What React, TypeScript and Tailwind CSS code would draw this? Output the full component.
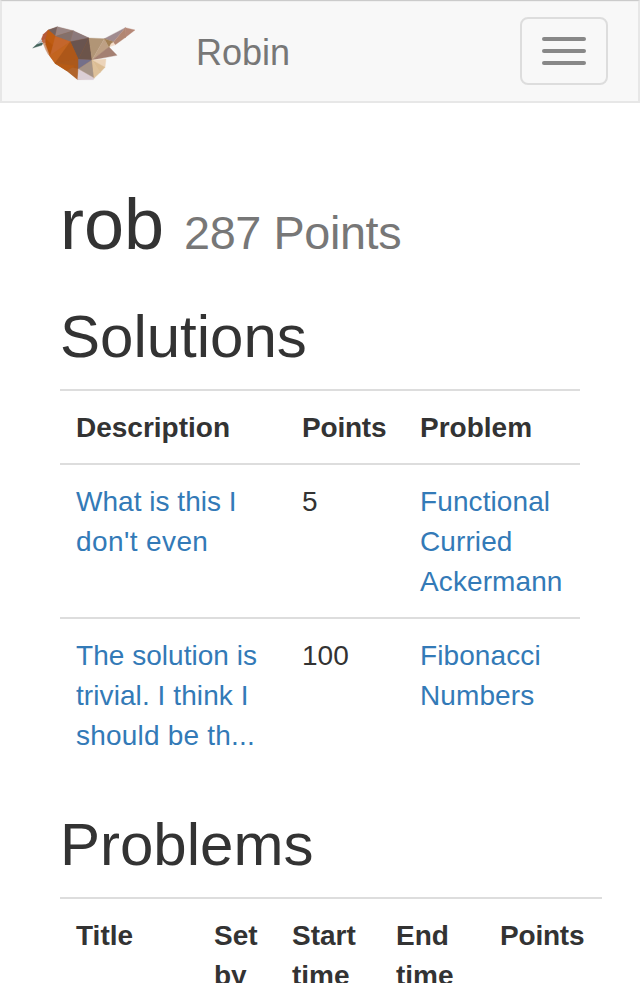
const facets: { points: string; fill: string }[] = [
  { points: '70,45 97,37 145,49 192,70 201,135 207,189 160,193 125,166 90,144 74,122 63,94 52,78 56,60', fill: '#b5602c' },
  { points: '23,99 44,80 54,85 50,91', fill: '#44635b' },
  { points: '36,87 49,73 52,82 40,86', fill: '#c3ccd4' },
  { points: '49,73 55,58 70,45 66,68 58,80', fill: '#b4593a' },
  { points: '50,78 66,68 64,84 57,86', fill: '#bb6a48' },
  { points: '54,84 64,84 75,122 70,119 62,104', fill: '#cf9878' },
  { points: '70,45 97,35 91,64', fill: '#75615e' },
  { points: '97,35 145,47 91,64', fill: '#9a8583' },
  { points: '91,64 145,47 136,80', fill: '#84706b' },
  { points: '145,47 192,69 136,80', fill: '#8c7a7c' },
  { points: '136,80 192,69 160,133', fill: '#69544f' },
  { points: '192,69 201,135 160,133', fill: '#6c544a' },
  { points: '70,45 91,64 64,70', fill: '#c4621b' },
  { points: '70,46 92,65 84,92 62,72', fill: '#bf5c12' },
  { points: '62,71 84,92 75,122 62,88', fill: '#b8550b' },
  { points: '91,64 136,80 76,122', fill: '#c4662c' },
  { points: '74,122 136,80 90,145', fill: '#c2641f' },
  { points: '136,80 160,133 90,145', fill: '#ad5719' },
  { points: '90,145 160,133 160,162', fill: '#ab591c' },
  { points: '90,145 160,162 158,194 125,167', fill: '#b1642c' },
  { points: '90,145 150,152 125,167', fill: '#b65b16' },
  { points: '160,133 201,135 160,162', fill: '#74708a' },
  { points: '160,162 201,135 207,190', fill: '#a59386' },
  { points: '160,162 207,189 205,194 158,194', fill: '#dccfd6' },
  { points: '192,69 238,71 201,135', fill: '#b19576' },
  { points: '238,71 252,98 201,135', fill: '#bea084' },
  { points: '252,96 276,121 201,135', fill: '#a48072' },
  { points: '238,71 301,38 266,80', fill: '#a08b8f' },
  { points: '238,71 266,80 252,97', fill: '#a27f54' },
  { points: '301,38 330,45 300,68', fill: '#b58776' },
  { points: '301,38 302,67 271,89 264,83', fill: '#b28672' },
  { points: '258,86 265,82 270,90 254,95', fill: '#f2dcc8' },
  { points: '201,135 243,132 240,158', fill: '#ecd4ba' },
  { points: '201,135 240,157 224,174', fill: '#dbbc93' },
  { points: '201,135 226,172 207,190', fill: '#dec19a' },
]

function RobinLogo() {
  return (
    <svg viewBox="0 0 360 225" className="h-[75px] w-[120px]" aria-label="Robin logo">
      {facets.map((f, i) => (
        <polygon key={i} points={f.points} fill={f.fill} stroke={f.fill} strokeWidth="1" />
      ))}
    </svg>
  )
}

function Navbar() {
  return (
    <nav className="flex h-[103px] items-start border-2 border-t border-[#e7e7e7] border-t-[#cbcbcb] bg-[#f8f8f8] shadow-[inset_0_1px_0_#f0f0f0]">
      <a href="#" className="ml-[23px] mt-[14px]">
        <RobinLogo />
      </a>
      <a href="#" className="ml-[51px] mt-8 text-[36px] leading-[40px] text-[#777]">
        Robin
      </a>
      <button className="ml-auto mr-[30px] mt-4 flex h-[68px] w-[88px] flex-col items-center justify-center gap-2 rounded-lg border-2 border-[#ddd]">
        <span className="h-1 w-11 rounded-[2px] bg-[#888]" />
        <span className="h-1 w-11 rounded-[2px] bg-[#888]" />
        <span className="h-1 w-11 rounded-[2px] bg-[#888]" />
      </button>
    </nav>
  )
}

const cell = 'border-t-2 border-[#ddd] px-4 pt-[17px] pb-[15px] text-left align-top'

const solutions = [
  {
    lines: [
      { text: 'What is this I', tracking: 'tracking-[0.03px]' },
      { text: "don't even", tracking: 'tracking-[0.4px]' },
    ],
    points: 5,
    problem: 'Functional Curried Ackermann',
  },
  {
    lines: [
      { text: 'The solution is', tracking: 'tracking-[0.03px]' },
      { text: 'trivial. I think I', tracking: 'tracking-[0.08px]' },
      { text: 'should be th...', tracking: 'tracking-[0.2px]' },
    ],
    points: 100,
    problem: 'Fibonacci Numbers',
  },
]

export default function App() {
  return (
    <div className="h-[983px] overflow-hidden bg-white font-['Liberation_Sans',Arial,sans-serif] text-[28px] leading-[40px] text-[#333]">
      <Navbar />
      <main className="px-[60px] pt-[81px]">
        <h1 className="text-[72px] leading-[80px]">
          rob <small className="text-[46.8px] leading-none tracking-[-0.4px] text-[#777]">287 Points</small>
        </h1>

        <h2 className="mb-[19px] mt-10 text-[60px] leading-[66px]">Solutions</h2>
        <table className="mb-[41px] w-[520px] table-fixed border-separate border-spacing-0">
          <colgroup>
            <col className="w-[226px]" />
            <col className="w-[118px]" />
            <col className="w-[176px]" />
          </colgroup>
          <thead>
            <tr>
              <th className={cell}>Description</th>
              <th className={`${cell} tracking-[-0.2px]`}>Points</th>
              <th className={cell}>Problem</th>
            </tr>
          </thead>
          <tbody>
            {solutions.map((s) => (
              <tr key={s.problem}>
                <td className={cell}>
                  <a href="#" className="text-[#337ab7]">
                    {s.lines.map((line) => (
                      <span key={line.text} className={`block whitespace-nowrap ${line.tracking}`}>
                        {line.text}
                      </span>
                    ))}
                  </a>
                </td>
                <td className={cell}>{s.points}</td>
                <td className={cell}>
                  <a href="#" className="tracking-[0.1px] text-[#337ab7]">{s.problem}</a>
                </td>
              </tr>
            ))}
          </tbody>
        </table>

        <h2 className="mb-[19px] text-[60px] leading-[66px]">Problems</h2>
        <table className="w-[542px] table-fixed border-separate border-spacing-0">
          <colgroup>
            <col className="w-[138px]" />
            <col className="w-[78px]" />
            <col className="w-[104px]" />
            <col className="w-[104px]" />
            <col className="w-[118px]" />
          </colgroup>
          <thead>
            <tr>
              <th className={cell}>Title</th>
              <th className={cell}>Set by</th>
              <th className={cell}>Start time</th>
              <th className={cell}>End time</th>
              <th className={`${cell} tracking-[-0.2px]`}>Points</th>
            </tr>
          </thead>
        </table>
      </main>
    </div>
  )
}
